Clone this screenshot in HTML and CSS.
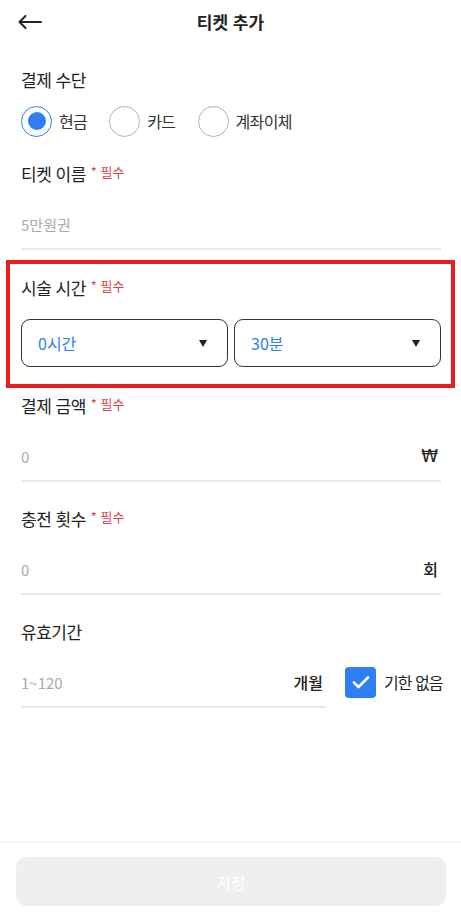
FILE: index.html
```html
<!DOCTYPE html>
<html lang="ko">
<head>
<meta charset="utf-8">
<title>티켓 추가</title>
<link rel="stylesheet" href="styles.css">
</head>
<body>
<div class="page">
  <header class="topbar">
    <div class="back">
      <svg width="24" height="14" viewBox="0 0 24 14" fill="none" stroke="#222" stroke-width="2" stroke-linecap="round" stroke-linejoin="round"><path d="M23 7H1.5M7.5 1L1.5 7l6 6"/></svg>
    </div>
    <h1 class="title">티켓 추가</h1>
    <div></div>
  </header>

  <main class="form">
    <section class="field first">
      <div class="label">결제 수단</div>
      <div class="radios">
        <div class="radio on"><span class="circle"><span class="dot"></span></span><span class="rtext">현금</span></div>
        <div class="radio"><span class="circle"></span><span class="rtext">카드</span></div>
        <div class="radio"><span class="circle"></span><span class="rtext">계좌이체</span></div>
      </div>
    </section>

    <section class="field">
      <div class="label">티켓 이름<span class="req">* 필수</span></div>
      <div class="inputrow"><span class="ph">5만원권</span></div>
    </section>

    <section class="timebox">
      <div class="label">시술 시간<span class="req">* 필수</span></div>
      <div class="selects">
        <div class="select"><span class="sval">0시간</span><span class="caret"></span></div>
        <div class="select"><span class="sval">30분</span><span class="caret"></span></div>
      </div>
    </section>

    <section class="field after-box">
      <div class="label">결제 금액<span class="req">* 필수</span></div>
      <div class="inputrow"><span class="ph">0</span><span class="unit won">₩</span></div>
    </section>

    <section class="field">
      <div class="label">충전 횟수<span class="req">* 필수</span></div>
      <div class="inputrow"><span class="ph">0</span><span class="unit">회</span></div>
    </section>

    <section class="field">
      <div class="label">유효기간</div>
      <div class="periodrow">
        <div class="inputrow short"><span class="ph">1~120</span><span class="unit">개월</span></div>
        <div class="check">
          <span class="box"><svg width="20" height="16" viewBox="0 0 20 16" fill="none" stroke="#fff" stroke-width="2.6" stroke-linecap="round" stroke-linejoin="round"><path d="M3 8.5l4.5 4.5L17 3.5"/></svg></span>
          <span class="ctext">기한 없음</span>
        </div>
      </div>
    </section>
  </main>

  <footer class="footer">
    <button class="save" type="button">저장</button>
  </footer>
</div>
</body>
</html>
```

FILE: styles.css
```css
* { box-sizing: border-box; }
html, body { margin: 0; padding: 0; background: #fff; }
body {
  font-family: "Noto Sans CJK KR", "Noto Sans", sans-serif;
  color: #222;
}
.page {
  width: 461px;
  height: 916px;
  display: flex;
  flex-direction: column;
}
.topbar {
  height: 44px;
  display: grid;
  grid-template-columns: 1fr auto 1fr;
  align-items: center;
}
.back {
  padding-left: 18px;
  display: flex;
  align-items: center;
}
.back svg { display: block; }
.title {
  margin: 0;
  font-size: 17px;
  font-weight: 700;
  line-height: 24px;
  color: #222;
}
.form {
  flex: 1;
}
.field {
  padding: 0 20px 0 21px;
  margin-top: 25px;
}
.field.first { margin-top: 24px; }
.field.after-box { margin-top: 6px; }
.label {
  font-size: 17px;
  letter-spacing: -0.5px;
  line-height: 24px;
  height: 24px;
  color: #222;
  display: flex;
  align-items: baseline;
  white-space: nowrap;
}
.req {
  font-size: 13px;
  letter-spacing: 0;
  color: #d9434b;
  margin-left: 5px;
  position: relative;
  top: -4px;
}
.radios {
  display: flex;
  align-items: center;
  margin-top: 13px;
  height: 32px;
}
.radio {
  display: flex;
  align-items: center;
  margin-right: 22px;
}
.circle {
  width: 31px;
  height: 31px;
  border-radius: 50%;
  border: 1.5px solid #b3b3b3;
  display: flex;
  align-items: center;
  justify-content: center;
}
.radio.on .circle { border-color: #2f7ff4; }
.dot {
  width: 18px;
  height: 18px;
  border-radius: 50%;
  background: #2f7ff4;
}
.rtext {
  margin-left: 7px;
  font-size: 16px;
  letter-spacing: -0.6px;
  color: #333;
}
.inputrow {
  margin-top: 16px;
  height: 48px;
  border-bottom: 2px solid #e8e8e8;
  display: flex;
  align-items: center;
  justify-content: space-between;
  padding-right: 3px;
  padding-bottom: 2px;
}
.ph {
  font-size: 15px;
  color: #ababab;
}
.unit {
  font-size: 16px;
  font-weight: 500;
  color: #222;
}
.unit.won {
  font-family: "DejaVu Sans", sans-serif;
  font-weight: 400;
  font-size: 17px;
}
.timebox {
  margin: 10px 6px 0 6px;
  border: 4px solid #e61e1e;
  padding: 12px 10px 17px 11px;
}
.selects {
  margin-top: 19px;
  display: grid;
  grid-template-columns: 1fr 1fr;
  gap: 6px;
}
.select {
  height: 48px;
  border: 1.5px solid #333;
  border-radius: 9px;
  display: flex;
  align-items: center;
  justify-content: space-between;
  padding: 0 20px 0 16px;
}
.sval {
  font-size: 16px;
  color: #2f7ff4;
}
.caret {
  width: 0;
  height: 0;
  border-left: 4.5px solid transparent;
  border-right: 4.5px solid transparent;
  border-top: 7px solid #222;
}
.periodrow {
  display: flex;
  align-items: flex-end;
}
.inputrow.short {
  width: 305px;
  flex: none;
}
.check {
  display: flex;
  align-items: center;
  margin-left: 19px;
  height: 48px;
  margin-bottom: 2px;
  white-space: nowrap;
  flex: none;
}
.box {
  width: 31px;
  height: 31px;
  border-radius: 4px;
  background: #2f7ff4;
  display: flex;
  align-items: center;
  justify-content: center;
  flex: none;
}
.ctext {
  margin-left: 8px;
  font-size: 16px;
  letter-spacing: -1px;
  color: #222;
}
.footer {
  border-top: 1px solid #f3f3f3;
  padding: 14px 15px 10px 16px;
}
.save {
  width: 100%;
  height: 49px;
  border: none;
  border-radius: 10px;
  background: #efefef;
  color: #fff;
  font-family: "Noto Sans CJK KR", "Noto Sans", sans-serif;
  font-size: 16px;
}
```
